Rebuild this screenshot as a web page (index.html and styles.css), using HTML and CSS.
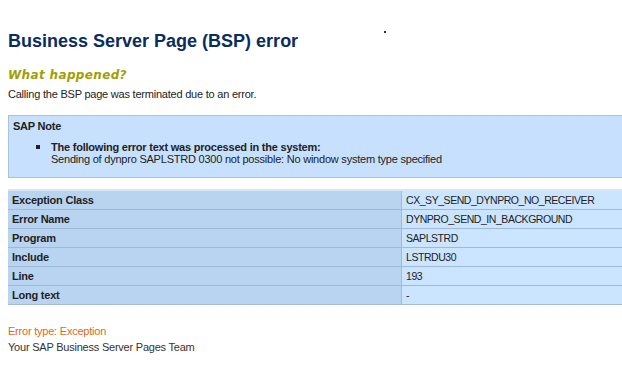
FILE: index.html
```html
<!DOCTYPE html>
<html lang="en">
<head>
    <meta charset="UTF-8">
    <title>BSP error</title>
    <link rel="stylesheet" href="styles.css">
</head>
<body>
    <span class="speck"></span>
    <h1 class="title">Business Server Page (BSP) error</h1>

    <h2 class="subtitle">What happened?</h2>
    <p class="text">Calling the BSP page was terminated due to an error.</p>

    <div class="note">
        <div class="note-head">SAP Note</div>
        <ul class="note-list">
            <li>
                <span class="note-strong">The following error text was processed in the system:</span>
                <span class="note-msg">Sending of dynpro SAPLSTRD 0300 not possible: No window system type specified</span>
            </li>
        </ul>
    </div>

    <table class="details">
        <tr><th>Exception Class</th><td>CX_SY_SEND_DYNPRO_NO_RECEIVER</td></tr>
        <tr><th>Error Name</th><td>DYNPRO_SEND_IN_BACKGROUND</td></tr>
        <tr><th>Program</th><td>SAPLSTRD</td></tr>
        <tr><th>Include</th><td>LSTRDU30</td></tr>
        <tr><th>Line</th><td>193</td></tr>
        <tr><th>Long text</th><td>-</td></tr>
    </table>

    <p class="error-type">Error type: Exception</p>
    <p class="team">Your SAP Business Server Pages Team</p>
</body>
</html>
```

FILE: styles.css
```css
body {
    margin: 0;
    padding: 0 0 0 8px;
    font-family: "Liberation Sans", Arial, sans-serif;
    font-size: 11px;
    letter-spacing: -0.22px;
    color: #222;
    background: #fff;
    overflow: hidden;
}
.speck {
    position: absolute;
    left: 384px;
    top: 31px;
    width: 2px;
    height: 2px;
    background: #333;
}
.title {
    margin: 30px 0 0;
    font-size: 18px;
    line-height: 22px;
    font-weight: bold;
    letter-spacing: 0;
    color: #0b2d5e;
}
.subtitle {
    margin: 15px 0 0;
    font-family: "DejaVu Sans", Verdana, sans-serif;
    font-size: 12px;
    line-height: 16px;
    font-style: italic;
    font-weight: bold;
    letter-spacing: 0.35px;
    color: #a0a000;
}
.text {
    margin: 4px 0 0;
    line-height: 14px;
}
.note {
    margin-top: 14px;
    margin-right: -10px;
    height: 58px;
    background: #c6e0fd;
    border: 1px solid #a9c3de;
    padding: 3px 0 0 4px;
}
.note-head {
    font-weight: bold;
    line-height: 14px;
}
.note-list {
    margin: 8px 0 0;
    padding-left: 38px;
    list-style: none;
}
.note-list li {
    position: relative;
    line-height: 12px;
}
.note-list li::before {
    content: "";
    position: absolute;
    left: -15px;
    top: 4px;
    width: 4px;
    height: 4px;
    background: #222;
}
.note-strong {
    display: block;
    font-weight: bold;
}
.note-msg {
    display: block;
}
.details {
    margin-top: 11px;
    width: 630px;
    border-collapse: collapse;
    border-top: 2px solid #d6e6f6;
}
.details th,
.details td {
    height: 18px;
    padding: 0 4px;
    text-align: left;
    border-bottom: 1px solid #9fb9d6;
}
.details th {
    width: 385px;
    font-weight: bold;
    background: #b9d4f1;
    border-right: 1px solid #9fb9d6;
}
.details td {
    font-size: 10.5px;
    letter-spacing: -0.45px;
    background: #cbe4ff;
}
.error-type {
    margin: 19px 0 0;
    line-height: 14px;
    color: #dd6a18;
}
.team {
    margin: 2px 0 0;
    line-height: 14px;
    color: #333;
}
```
